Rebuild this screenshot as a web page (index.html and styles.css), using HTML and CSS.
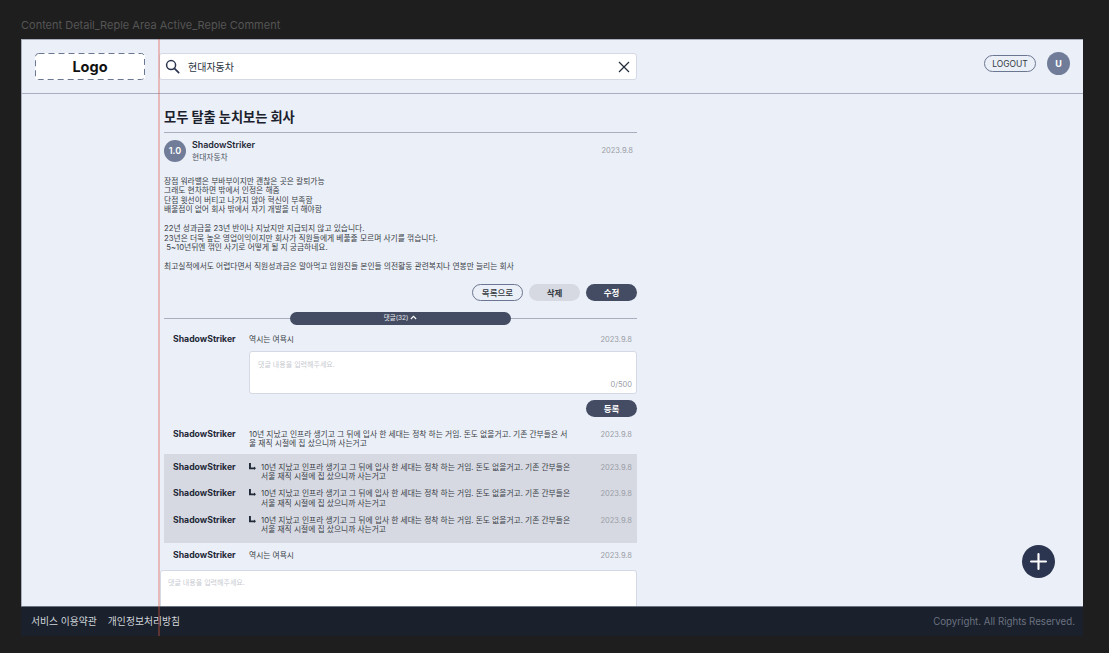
FILE: index.html
```html
<!DOCTYPE html>
<html lang="ko">
<head>
<meta charset="utf-8">
<title>Content Detail</title>
<link rel="stylesheet" href="styles.css">
</head>
<body>
<div class="frame-label">Content Detail_Reple Area Active_Reple Comment</div>
<div class="frame">
  <header class="topbar">
    <div class="logo-col">
      <div class="logo">
        <svg class="logo-dash" viewBox="0 0 110 27" fill="none"><rect x="0.5" y="0.5" width="109" height="26" rx="3" stroke="#6b7690" stroke-width="1" stroke-dasharray="6 4"/></svg>
        Logo
      </div>
    </div>
    <div class="search">
      <svg class="search-icon" viewBox="0 0 16 16" fill="none"><circle cx="6.5" cy="6.5" r="4.8" stroke="#2b3550" stroke-width="1.6"/><path d="M10 10l4.6 4.6" stroke="#2b3550" stroke-width="1.8" stroke-linecap="round"/></svg>
      <span class="search-text">현대자동차</span>
      <svg class="close-icon" viewBox="0 0 12 12" fill="none"><path d="M1 1l10 10M11 1L1 11" stroke="#1f2937" stroke-width="1.2"/></svg>
    </div>
    <div class="user">
      <button class="logout">LOGOUT</button>
      <div class="user-avatar">U</div>
    </div>
  </header>
  <main class="content">
    <article class="article">
      <h1 class="title">모두 탈출 눈치보는 회사</h1>
      <div class="author">
        <div class="score">1.0</div>
        <div class="author-info">
          <div class="author-name">ShadowStriker</div>
          <div class="author-company">현대자동차</div>
        </div>
        <div class="date">2023.9.8</div>
      </div>
      <div class="body-text">
        <p>장점 워라밸은 부바부이지만 괜찮은 곳은 칼퇴가능<br>그래도 현차하면 밖에서 인정은 해줌<br>단점 윗선이 버티고 나가지 않아 혁신이 부족함<br>배울점이 없어 회사 밖에서 자기 개발을 더 해야함</p>
        <p>22년 성과금을 23년 반이나 지났지만 지급되지 않고 있습니다.<br>23년은 더욱 높은 영업이익이지만 회사가 직원들에게 베풀줄 모르며 사기를 꺾습니다.<br>&nbsp;5~10년뒤엔 꺾인 사기로 어떻게 될 지 궁금하네요.</p>
        <p>최고실적에서도 어렵다면서 직원성과금은 말아먹고 임원진들 본인들 의전활동 관련복지나 연봉만 늘리는 회사</p>
      </div>
      <div class="actions">
        <button class="btn btn-outline">목록으로</button>
        <button class="btn btn-grey">삭제</button>
        <button class="btn btn-dark">수정</button>
      </div>
      <div class="divider">
        <button class="toggle">댓글(32)
          <svg class="chevron" viewBox="0 0 8 5" fill="none"><path d="M1 4.2l3-3 3 3" stroke="#fff" stroke-width="1.3"/></svg>
        </button>
      </div>
      <div class="comment first">
        <div class="c-name">ShadowStriker</div>
        <div class="c-text">역시는 여욕시</div>
        <div class="c-date">2023.9.8</div>
      </div>
      <div class="editor-wrap">
        <div class="editor">
          <div class="placeholder">댓글 내용을 입력해주세요.</div>
          <div class="counter">0/500</div>
        </div>
      </div>
      <div class="submit-row"><button class="btn btn-dark">등록</button></div>
      <div class="comment long">
        <div class="c-name">ShadowStriker</div>
        <div class="c-text">10년 지났고 인프라 생기고 그 뒤에 입사 한 세대는 정착 하는 거임. 돈도 없을거고. 기존 간부들은 서울 재직 시절에 집 샀으니까 사는거고</div>
        <div class="c-date">2023.9.8</div>
      </div>
      <div class="replies">
        <div class="comment reply">
          <div class="c-name">ShadowStriker</div>
          <svg class="reply-icon" viewBox="0 0 7 7"><path d="M0 0h1.9v4.4H5V3.5L7 5.3 5 7V6.3H0z" fill="#1f2937"/></svg>
          <div class="c-text">10년 지났고 인프라 생기고 그 뒤에 입사 한 세대는 정착 하는 거임. 돈도 없을거고. 기존 간부들은 서울 재직 시절에 집 샀으니까 사는거고</div>
          <div class="c-date">2023.9.8</div>
        </div>
        <div class="comment reply">
          <div class="c-name">ShadowStriker</div>
          <svg class="reply-icon" viewBox="0 0 7 7"><path d="M0 0h1.9v4.4H5V3.5L7 5.3 5 7V6.3H0z" fill="#1f2937"/></svg>
          <div class="c-text">10년 지났고 인프라 생기고 그 뒤에 입사 한 세대는 정착 하는 거임. 돈도 없을거고. 기존 간부들은 서울 재직 시절에 집 샀으니까 사는거고</div>
          <div class="c-date">2023.9.8</div>
        </div>
        <div class="comment reply">
          <div class="c-name">ShadowStriker</div>
          <svg class="reply-icon" viewBox="0 0 7 7"><path d="M0 0h1.9v4.4H5V3.5L7 5.3 5 7V6.3H0z" fill="#1f2937"/></svg>
          <div class="c-text">10년 지났고 인프라 생기고 그 뒤에 입사 한 세대는 정착 하는 거임. 돈도 없을거고. 기존 간부들은 서울 재직 시절에 집 샀으니까 사는거고</div>
          <div class="c-date">2023.9.8</div>
        </div>
      </div>
      <div class="comment last">
        <div class="c-name">ShadowStriker</div>
        <div class="c-text">역시는 여욕시</div>
        <div class="c-date">2023.9.8</div>
      </div>
    </article>
    <div class="bottom-editor"><div class="placeholder">댓글 내용을 입력해주세요.</div></div>
  </main>
  <footer class="footer">
    <div class="footer-links"><span>서비스 이용약관</span><span>개인정보처리방침</span></div>
    <div class="copyright">Copyright. All Rights Reserved.</div>
  </footer>
  <button class="fab" aria-label="추가"><svg viewBox="0 0 16 16" fill="none"><path d="M8 1v14M1 8h14" stroke="#fff" stroke-width="2" stroke-linecap="round"/></svg></button>
  <div class="guide"></div>
</div>
</body>
</html>
```
FILE: styles.css
```css
* { box-sizing: border-box; }
html, body { margin: 0; height: 100%; overflow: hidden; }
body {
  background: #1e1e1e;
  font-family: Inter, "Noto Sans CJK KR", sans-serif;
  color: #1f2937;
  padding: 18px 26px 0 21px;
}
p { margin: 0; }
button { font-family: inherit; cursor: pointer; padding: 0; }
.frame-label { font-size: 11px; line-height: 15px; height: 21px; color: #555; white-space: nowrap; }
.frame {
  position: relative;
  width: 1062px;
  height: 597px;
  display: flex;
  flex-direction: column;
  background: #ebeff7;
  overflow: hidden;
}
.topbar {
  flex: none;
  height: 55px;
  display: flex;
  align-items: flex-start;
  border-top: 1px solid #a9aebf;
  border-left: 1px solid #a9aebf;
  border-bottom: 1px solid #a9aebf;
  padding-top: 13px;
}
.logo-col { width: 137px; padding-left: 13px; }
.logo {
  position: relative;
  width: 110px;
  height: 27px;
  background: #fff;
  border-radius: 3px;
  font-size: 14.5px;
  font-weight: 700;
  color: #111;
  text-align: center;
  line-height: 28px;
}
.logo-dash { position: absolute; left: 0; top: 0; width: 110px; height: 27px; }
.search {
  width: 478px;
  height: 27px;
  background: #fff;
  border: 1px solid #d5d9e6;
  border-radius: 3px;
  display: flex;
  align-items: center;
  padding: 0 5px;
}
.search-icon { width: 15px; height: 15px; margin-right: 7px; flex: none; }
.search-text { flex: 1; font-size: 10px; color: #2b3442; margin-left: 1px; margin-top: -1px; }
.close-icon { width: 12px; height: 12px; margin-right: 1px; }
.user { margin-left: auto; display: flex; align-items: center; gap: 11px; padding-right: 13px; margin-top: -1px; }
.logout {
  width: 52px;
  height: 17px;
  border: 1px solid #6b7690;
  border-radius: 9px;
  background: transparent;
  font-size: 8.5px;
  color: #33383f;
}
.user-avatar {
  width: 23px;
  height: 23px;
  border-radius: 50%;
  background: #717d98;
  color: #fff;
  font-size: 9px;
  font-weight: 700;
  text-align: center;
  line-height: 23px;
}
.content { flex: 1; min-height: 0; padding-left: 137px; border-left: 1px solid #a9aebf; }
.article { width: 478px; padding-left: 5px; }
.title {
  margin: 0;
  padding-top: 13px;
  height: 39px;
  font-size: 13.2px;
  line-height: 20px;
  font-weight: 700;
  color: #1a202c;
  border-bottom: 1px solid #a9aebf;
}
.author { display: flex; align-items: center; height: 23px; margin-top: 6px; padding-right: 4px; }
.score {
  width: 22px;
  height: 22px;
  border-radius: 50%;
  background: #717d98;
  color: #fff;
  font-size: 9px;
  font-weight: 600;
  text-align: center;
  line-height: 22px;
}
.author-info { flex: 1; margin-left: 6px; }
.author-name { font-size: 8.9px; line-height: 13px; font-weight: 600; color: #1f2937; }
.author-company { font-size: 7.75px; line-height: 12px; color: #4b5563; }
.date { font-size: 7.5px; color: #9a9da6; }
.body-text { margin-top: 15px; font-size: 7.75px; line-height: 9.45px; color: #3a3f47; display: flex; flex-direction: column; gap: 9.45px; }
.actions { display: flex; justify-content: flex-end; gap: 6px; margin-top: 12px; }
.btn {
  width: 51px;
  height: 17px;
  border-radius: 9px;
  border: 0;
  font-size: 8.5px;
  font-weight: 500;
}
.btn-outline { background: transparent; border: 1px solid #6b7690; color: #33383f; }
.btn-grey { background: #d6d9e2; color: #33383f; font-weight: 700; }
.btn-dark { background: #444c63; color: #fff; font-weight: 700; }
.divider {
  margin-top: 11px;
  height: 13px;
  display: flex;
  justify-content: center;
  background: linear-gradient(#a9aebf, #a9aebf) center / 100% 1px no-repeat;
}
.toggle {
  width: 221px;
  height: 13px;
  border: 0;
  border-radius: 7px;
  background: #444c63;
  color: #e5e7ee;
  font-size: 6.5px;
  line-height: 13px;
}
.chevron { width: 7px; height: 5px; }
.comment { display: grid; grid-template-columns: 76px 1fr 60px; font-size: 7.75px; line-height: 9.45px; padding-left: 9px; padding-right: 5px; }
.c-name { font-size: 8.7px; font-weight: 700; color: #1f2937; line-height: 9.45px; white-space: nowrap; }
.c-text { color: #3a3f47; }
.c-date { color: #9a9da6; text-align: right; font-size: 7.5px; }
.comment.first { margin-top: 10px; }
.editor-wrap { padding-left: 85px; margin-top: 7px; }
.editor {
  height: 43px;
  background: #fff;
  border: 1px solid #d5d9e6;
  border-radius: 3px;
  position: relative;
  padding: 8px;
}
.placeholder { font-size: 7px; line-height: 9px; color: #c8cad1; }
.counter { position: absolute; right: 4px; bottom: 3px; font-size: 7.5px; line-height: 10px; color: #9a9da6; }
.submit-row { display: flex; justify-content: flex-end; margin-top: 6px; }
.comment.long { margin-top: 13px; grid-template-columns: 76px 321px 1fr; }
.replies {
  margin-top: 5px;
  height: 89px;
  background: #d6d9e2;
  padding-top: 9px;
  display: flex;
  flex-direction: column;
  gap: 7.6px;
}
.comment.reply { grid-template-columns: 76px 12px 312px 1fr; }
.reply-icon { width: 7px; height: 7px; }
.comment.last { margin-top: 8px; }
.bottom-editor {
  margin-left: 1px;
  margin-top: 10px;
  width: 477px;
  height: 60px;
  background: #fff;
  border: 1px solid #d5d9e6;
  border-radius: 3px;
  padding: 7px 7px;
}
.footer {
  position: absolute;
  left: 0;
  right: 0;
  bottom: 0;
  height: 30px;
  background: #1a202c;
  border-top: 1px solid #6b7280;
  display: flex;
  align-items: center;
  justify-content: space-between;
  padding: 0 8px 2px 10px;
  font-size: 9.7px;
}
.footer-links { display: flex; gap: 11px; color: #d1d5db; font-size: 9.8px; }
.copyright { color: #6b7280; margin-top: 1px; }
.fab {
  position: absolute;
  left: 1001px;
  top: 506px;
  width: 33px;
  height: 33px;
  border-radius: 50%;
  border: 0;
  background: #2b3550;
  display: flex;
  align-items: center;
  justify-content: center;
}
.fab svg { width: 17px; height: 17px; }
.guide {
  position: absolute;
  left: 137px;
  top: 0;
  bottom: 0;
  width: 1.5px;
  background: rgba(220, 90, 70, 0.35);
}
```
